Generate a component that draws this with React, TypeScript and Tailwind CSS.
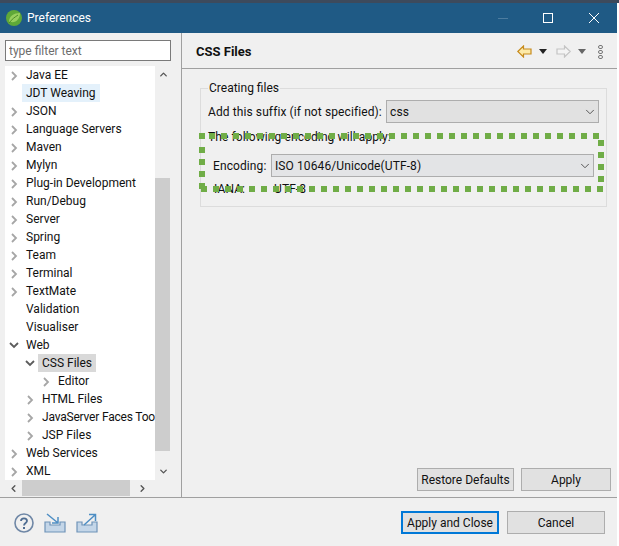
import { ChevronDown, ChevronUp, ChevronLeft, ChevronRight } from "lucide-react";

type Row = { label: string; level: number; arrow?: "open" | "closed"; style?: string };

const rows: Row[] = [
  { label: "Java EE", level: 0, arrow: "closed" },
  { label: "JDT Weaving", level: 0, style: "bg-[#e4f1fb]" },
  { label: "JSON", level: 0, arrow: "closed" },
  { label: "Language Servers", level: 0, arrow: "closed" },
  { label: "Maven", level: 0, arrow: "closed" },
  { label: "Mylyn", level: 0, arrow: "closed" },
  { label: "Plug-in Development", level: 0, arrow: "closed" },
  { label: "Run/Debug", level: 0, arrow: "closed" },
  { label: "Server", level: 0, arrow: "closed" },
  { label: "Spring", level: 0, arrow: "closed" },
  { label: "Team", level: 0, arrow: "closed" },
  { label: "Terminal", level: 0, arrow: "closed" },
  { label: "TextMate", level: 0, arrow: "closed" },
  { label: "Validation", level: 0 },
  { label: "Visualiser", level: 0 },
  { label: "Web", level: 0, arrow: "open" },
  { label: "CSS Files", level: 1, arrow: "open", style: "bg-[#d9d9d9]" },
  { label: "Editor", level: 2, arrow: "closed" },
  { label: "HTML Files", level: 1, arrow: "closed" },
  { label: "JavaServer Faces Too", level: 1, arrow: "closed", style: "tracking-[-0.2px]" },
  { label: "JSP Files", level: 1, arrow: "closed" },
  { label: "Web Services", level: 0, arrow: "closed" },
  { label: "XML", level: 0, arrow: "closed" },
];

const indents = ["pl-[4px]", "pl-[20px]", "pl-[36px]"];

function Arrow({ open }: { open: boolean }) {
  if (open) {
    return (
      <svg width="10" height="10" viewBox="0 0 10 10" className="shrink-0">
        <path d="M1 3 L5 7 L9 3" fill="none" stroke="#5c5c5c" strokeWidth="1.8" />
      </svg>
    );
  }
  return (
    <svg width="10" height="10" viewBox="0 0 10 10" className="shrink-0 mt-[2px]">
      <path d="M3 1 L7 5 L3 9" fill="none" stroke="#a6a6a6" strokeWidth="1.8" />
    </svg>
  );
}

function TreeRow({ row }: { row: Row }) {
  return (
    <div className={`flex items-center h-[18px] whitespace-nowrap ${indents[row.level]}`}>
      <div className="w-[10px] shrink-0">{row.arrow && <Arrow open={row.arrow === "open"} />}</div>
      <div className={`ml-[3px] pl-[4px] pr-[4px] h-[18px] leading-[18px] ${row.style ?? ""}`}>{row.label}</div>
    </div>
  );
}

function Caret({ color }: { color: string }) {
  return (
    <svg width="8" height="5" viewBox="0 0 8 5">
      <path d="M0 0 H8 L4 5 Z" fill={color} />
    </svg>
  );
}

function ToolArrow({ back }: { back?: boolean }) {
  return (
    <svg width="15" height="13" viewBox="0 0 15 13">
      {back ? (
        <path d="M0.8 6.5 L6.5 1 V4 H14 V9 H6.5 V12 Z" fill="#fdeaa8" stroke="#c68a1c" strokeWidth="1.2" />
      ) : (
        <path d="M14.2 6.5 L8.5 1 V4 H1 V9 H8.5 V12 Z" fill="#f4f4f4" stroke="#c4c4c4" strokeWidth="1.2" />
      )}
    </svg>
  );
}

function Combo({ value, className }: { value: string; className: string }) {
  return (
    <div className={`flex items-center justify-between border border-[#adadad] pl-[3px] pr-[1px] h-[23px] ${className}`}>
      <span>{value}</span>
      <ChevronDown size={14} strokeWidth={1.5} className="text-[#444]" />
    </div>
  );
}

function Btn({ label, className }: { label: string; className: string }) {
  return (
    <button className={`h-[23px] bg-[#e1e1e1] text-center leading-none ${className}`}>
      {label}
    </button>
  );
}

export default function App() {
  return (
    <div className="relative w-[619px] h-[546px] overflow-hidden bg-white text-[12px] text-[#111] font-['Roboto',sans-serif]">
      <div className="h-[3px] bg-[#3d4a5c]" />
      <div className="w-[617px] bg-[#f0f0f0]">
        {/* Title bar */}
        <div className="flex items-center h-[30px] bg-[#1f5a85] text-white pl-[6px]">
          <svg width="16" height="16" viewBox="0 0 16 16">
            <circle cx="8" cy="8" r="8" fill="#5fa838" />
            <path d="M3 12 C3 6 8 3 14 3 C14 9 10 13 5 12 Z" fill="#97cf5e" />
            <path d="M3 13 C6 9 9 7 12 5" stroke="#4d8a28" strokeWidth="1" fill="none" />
          </svg>
          <span className="ml-[5px]">Preferences</span>
          <div className="ml-auto flex items-center">
            <div className="w-[10px] h-[1px] bg-[#4d7c9f] mr-[35px]" />
            <div className="w-[10px] h-[10px] border border-white mr-[36px]" />
            <svg width="10" height="10" viewBox="0 0 10 10" className="mr-[18px]">
              <path d="M0 0 L10 10 M10 0 L0 10" stroke="white" strokeWidth="1" />
            </svg>
          </div>
        </div>

        {/* Main area */}
        <div className="flex h-[465px] border-b border-[#a0a0a0]">
          <div className="w-[181px] shrink-0 pl-[5px] pr-[10px] pt-[7px]">
            <input
              readOnly
              placeholder="type filter text"
              className="block w-[166px] h-[21px] border border-[#7a7a7a] bg-white px-[3px] mb-[5px] placeholder:text-[#6d6d6d] outline-none"
            />
            <div className="flex h-[414px]">
              <div className="w-[150px] bg-white overflow-hidden">
                {rows.map((row) => (
                  <TreeRow key={row.label} row={row} />
                ))}
              </div>
              <div className="w-[16px] flex flex-col">
                <div className="h-[17px] flex items-center justify-center">
                  <ChevronUp size={11} strokeWidth={3} className="text-[#555]" />
                </div>
                <div className="h-[95px]" />
                <div className="h-[273px] bg-[#cdcdcd] mr-[1px]" />
                <div className="flex-1 flex items-end justify-center pb-[3px]">
                  <ChevronDown size={11} strokeWidth={3} className="text-[#555]" />
                </div>
              </div>
            </div>
            <div className="flex h-[16px] w-[150px] items-center">
              <div className="w-[17px] flex justify-center">
                <ChevronLeft size={11} strokeWidth={3} className="text-[#555]" />
              </div>
              <div className="w-[108px] h-full bg-[#cdcdcd]" />
              <div className="flex-1 flex justify-center">
                <ChevronRight size={11} strokeWidth={3} className="text-[#555]" />
              </div>
            </div>
          </div>

          <div className="w-[1px] bg-[#a0a0a0]" />

          <div className="flex-1 flex flex-col">
            <div className="flex items-center h-[36px] border-b border-[#a0a0a0] pl-[14px] pr-[14px] pt-[2px]">
              <span className="font-bold text-[13px]">CSS Files</span>
              <div className="ml-auto flex items-center">
                <ToolArrow back />
                <div className="ml-[7px]"><Caret color="#222" /></div>
                <div className="ml-[9px]"><ToolArrow /></div>
                <div className="ml-[7px]"><Caret color="#666" /></div>
                <div className="ml-[12px] flex flex-col gap-[1px]">
                  <div className="w-[5px] h-[4px] rounded-full border border-[#777]" />
                  <div className="w-[5px] h-[4px] rounded-full border border-[#777]" />
                  <div className="w-[5px] h-[4px] rounded-full border border-[#777]" />
                </div>
              </div>
            </div>

            <div className="pl-[18px] pr-[10px] pt-[11px]">
              <fieldset className="border border-[#dcdcdc] h-[127px] px-[7px] tracking-[0.1px]">
                <legend className="px-[1px] leading-[16px] tracking-normal">Creating files</legend>
                <div className="flex items-center h-[23px] mt-[4px]">
                  <span>Add this suffix (if not specified):</span>
                  <Combo value="css" className="ml-auto w-[213px] bg-[#e1e1e1]" />
                </div>
                <div className="leading-[16px] mt-[6px]">The following encoding will apply:</div>
                <div className="flex items-center h-[23px] mt-[9px] pl-[5px] pr-[5px]">
                  <span>Encoding:</span>
                  <Combo value="ISO 10646/Unicode(UTF-8)" className="ml-auto w-[323px] bg-[#e3e4e6]" />
                </div>
                <div className="flex leading-[16px] mt-[4px] pl-[6px]">
                  <span className="w-[60px]">IANA:</span>
                  <span>UTF-8</span>
                </div>
              </fieldset>
            </div>

            <div className="mt-auto flex justify-end gap-[7px] pr-[6px] pb-[6px]">
              <Btn label="Restore Defaults" className="w-[97px] border border-[#adadad]" />
              <Btn label="Apply" className="w-[90px] border border-[#adadad]" />
            </div>
          </div>
        </div>

        {/* Footer */}
        <div className="flex items-center h-[48px] pl-[14px] pr-[12px] pt-[1px]">
          <svg width="20" height="20" viewBox="0 0 20 20">
            <circle cx="10" cy="10" r="9" fill="none" stroke="#6f87a6" strokeWidth="1.6" />
            <path d="M7 8 C7 4.5 13 4.5 13 8 C13 10 10 10 10 12.5" fill="none" stroke="#4f6d92" strokeWidth="1.8" />
            <rect x="9" y="14" width="2" height="2" fill="#4f6d92" />
          </svg>
          <svg width="22" height="20" viewBox="0 0 22 20" className="ml-[10px]">
            <path d="M1 9 V19 H21 V9 H16 V12 H6 V9 Z" fill="#c4d6e8" stroke="#6f93b8" strokeWidth="1.2" />
            <path d="M3 1 L14 10 M14 4 V10 H8" fill="none" stroke="#4e8ec4" strokeWidth="1.5" />
          </svg>
          <svg width="22" height="20" viewBox="0 0 22 20" className="ml-[10px]">
            <path d="M1 9 V19 H21 V9 H16 V12 H6 V9 Z" fill="#c4d6e8" stroke="#6f93b8" strokeWidth="1.2" />
            <path d="M8 12 L19 2 M13 1.5 H19.5 V8" fill="none" stroke="#4e8ec4" strokeWidth="1.5" />
          </svg>
          <div className="ml-auto flex gap-[8px]">
            <Btn label="Apply and Close" className="w-[98px] border-2 border-[#0078d7]" />
            <Btn label="Cancel" className="w-[98px] border border-[#adadad]" />
          </div>
        </div>
      </div>

      {/* Green dotted annotation laid over the dialog */}
      <svg width="619" height="546" className="absolute inset-0 pointer-events-none">
        <path
          d="M199 136 H205 M209 136 H604 M601 140 V182 M201 189 H604 M202 147 V189"
          fill="none"
          stroke="#70ad47"
          strokeWidth="6"
          strokeDasharray="6 6"
        />
      </svg>
    </div>
  );
}
